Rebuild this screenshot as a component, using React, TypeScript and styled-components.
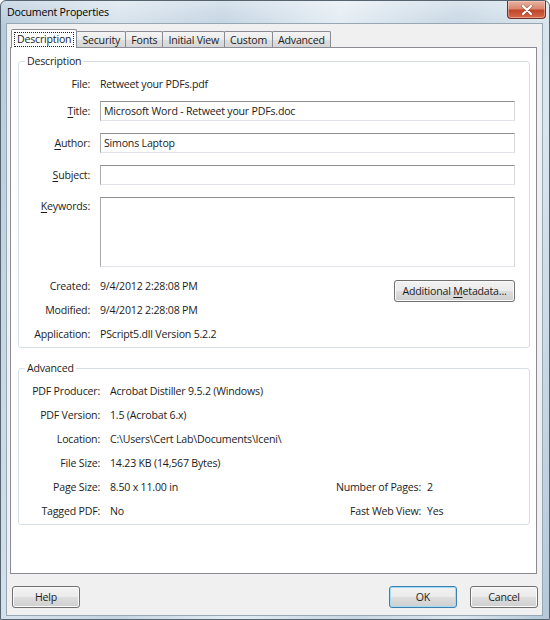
import React from "react";
import styled, { createGlobalStyle } from "styled-components";

const GlobalStyle = createGlobalStyle`
  html, body {
    margin: 0;
    padding: 0;
  }
  body {
    width: 550px;
    height: 620px;
    overflow: hidden;
    font-family: "Segoe UI", "Open Sans", "Noto Sans", sans-serif;
    font-size: 10.6px;
    letter-spacing: -0.2px;
    color: #1c1c1c;
  }
  * {
    box-sizing: border-box;
  }
`;

const Window = styled.div`
  width: 550px;
  height: 620px;
  display: flex;
  flex-direction: column;
  border: 1px solid #56646f;
  border-radius: 6px 6px 0 0;
  background: linear-gradient(
      180deg,
      rgba(255, 255, 255, 0.35) 0%,
      rgba(255, 255, 255, 0) 4%
    ),
    linear-gradient(
      100deg,
      #b5cadb 0%,
      #d6e2ec 18%,
      #c3d4e2 34%,
      #e3ecf3 52%,
      #c6d6e3 70%,
      #dbe6ef 86%,
      #b3c8da 100%
    );
`;

const TitleBar = styled.div`
  height: 22px;
  flex: none;
  display: flex;
  justify-content: space-between;
  align-items: flex-start;
  padding-left: 6px;
`;

const Caption = styled.span`
  padding-top: 3px;
  line-height: 16px;
  color: #000;
`;

const CloseButton = styled.div`
  width: 39px;
  height: 18px;
  margin-right: 3px;
  border: 1px solid #6e3024;
  border-top: none;
  border-radius: 0 0 4px 4px;
  background: linear-gradient(
    180deg,
    #e9b2a2 0%,
    #d98770 45%,
    #c0462a 55%,
    #d66a48 100%
  );
  box-shadow: inset 0 0 0 1px rgba(255, 220, 210, 0.45);
  display: flex;
  align-items: center;
  justify-content: center;
`;

const Client = styled.div`
  flex: 1;
  margin: 0 6px 3px 5px;
  border: 1px solid #98a7b4;
  background: #f0f0f0;
  display: flex;
  flex-direction: column;
  padding: 5px 5px 0 3px;
`;

const TabStrip = styled.div`
  height: 18px;
  display: flex;
  align-items: flex-end;
  padding-left: 1px;
`;

const Tab = styled.div<{ $active?: boolean }>`
  position: relative;
  z-index: ${(p) => (p.$active ? 2 : 1)};
  height: ${(p) => (p.$active ? 19 : 16)}px;
  margin-bottom: ${(p) => (p.$active ? -1 : 0)}px;
  margin-left: -1px;
  padding: 0 ${(p) => (p.$active ? 2 : 5)}px;
  border: 1px solid #898c95;
  border-bottom: none;
  border-radius: 2px 2px 0 0;
  background: ${(p) =>
    p.$active
      ? "#ffffff"
      : "linear-gradient(180deg, #f4f4f4 0%, #eaeaea 50%, #dedede 52%, #d6d6d6 100%)"};
  display: flex;
  align-items: center;
  line-height: 14px;
  white-space: nowrap;
  &:first-child {
    margin-left: 0;
  }
`;

const FocusLabel = styled.span`
  border: 1px dotted #222;
  padding: 0 2px;
  line-height: 13px;
`;

const Panel = styled.div`
  flex: 1;
  background: #fff;
  border: 1px solid #898c95;
  padding: 5px 6px 0 7px;
  display: flex;
  flex-direction: column;
`;

const GroupBox = styled.fieldset<{ $mt?: number }>`
  margin: ${(p) => p.$mt ?? 0}px 0 0 0;
  padding: 5px 14px 3px 7px;
  border: 1px solid #d5dfe5;
  border-radius: 3px;
  min-width: 0;
`;

const Legend = styled.legend`
  padding: 0 2px;
  margin-left: -1px;
  line-height: 16px;
  color: #1c1c1c;
`;

const FieldRow = styled.div<{ $mt?: number; $h: number }>`
  display: grid;
  grid-template-columns: 74px 1fr;
  margin-top: ${(p) => p.$mt ?? 0}px;
  height: ${(p) => p.$h}px;
`;

const Label = styled.div<{ $top?: boolean }>`
  text-align: right;
  padding-right: 10px;
  line-height: ${(p) => (p.$top ? "16px" : "20px")};
  padding-top: ${(p) => (p.$top ? 1 : 0)}px;
  white-space: nowrap;
`;

const Value = styled.div`
  line-height: 20px;
  white-space: nowrap;
`;

const TextBox = styled.input`
  width: 100%;
  height: 20px;
  margin: 0;
  padding: 0 3px;
  border: 1px solid;
  border-color: #8f8f8f #d6d6d6 #e2e3ea #aaaaaa;
  background: #fff;
  font: inherit;
  letter-spacing: inherit;
  color: #1c1c1c;
  outline: none;
`;

const TextArea = styled.textarea`
  width: 100%;
  height: 70px;
  margin: 0;
  padding: 1px 3px;
  border: 1px solid;
  border-color: #8f8f8f #d6d6d6 #e2e3ea #aaaaaa;
  background: #fff;
  font: inherit;
  resize: none;
  outline: none;
`;

const DateGrid = styled.div`
  display: grid;
  grid-template-columns: 74px 1fr auto;
  grid-auto-rows: 20px;
  row-gap: 4px;
  margin-top: 9px;
`;

const AdvGrid = styled.div`
  display: grid;
  grid-template-columns: 84px 1fr auto 88px;
  grid-auto-rows: 20px;
  row-gap: 4px;
`;

const SideLabel = styled.div`
  text-align: right;
  padding-right: 6px;
  line-height: 20px;
  white-space: nowrap;
`;

const Button = styled.button<{ $default?: boolean; $w?: number }>`
  width: ${(p) => p.$w ?? 68}px;
  height: 22px;
  padding: 0;
  margin: 0;
  font: inherit;
  letter-spacing: inherit;
  color: #1c1c1c;
  border: 1px solid ${(p) => (p.$default ? "#3c7fb1" : "#707070")};
  border-radius: 3px;
  background: linear-gradient(
    180deg,
    #f2f2f2 0%,
    #ebebeb 48%,
    #dddddd 52%,
    #cfcfcf 100%
  );
  box-shadow: inset 0 0 0 1px
    ${(p) => (p.$default ? "#9fdcf5" : "#fbfbfb")};
  line-height: 18px;
`;

const MetaButton = styled(Button)`
  grid-column: 3;
  grid-row: 1 / span 2;
  align-self: start;
  margin-top: 4px;
`;

const Footer = styled.div`
  height: 41px;
  flex: none;
  display: flex;
  align-items: flex-start;
  padding-top: 12px;
  margin: 0 -1px 0 2px;
  gap: 13px;
`;

const Spacer = styled.div`
  flex: 1;
`;

const Key = styled.u`
  text-decoration-thickness: 1px;
  text-underline-offset: 2px;
`;

const tabs = ["Security", "Fonts", "Initial View", "Custom", "Advanced"];

const App = () => {
  return (
    <>
      <GlobalStyle />
      <Window>
        <TitleBar>
          <Caption>Document Properties</Caption>
          <CloseButton>
            <svg width="12" height="10" viewBox="0 0 12 10">
              <path
                d="M2 1 L10 9 M10 1 L2 9"
                stroke="#5a1a10"
                strokeWidth="3.4"
                strokeLinecap="round"
                opacity="0.35"
              />
              <path
                d="M2 1 L10 9 M10 1 L2 9"
                stroke="#ffffff"
                strokeWidth="2.2"
                strokeLinecap="round"
              />
            </svg>
          </CloseButton>
        </TitleBar>
        <Client>
          <TabStrip>
            <Tab $active>
              <FocusLabel>Description</FocusLabel>
            </Tab>
            {tabs.map((t) => (
              <Tab key={t}>{t}</Tab>
            ))}
          </TabStrip>
          <Panel>
            <GroupBox>
              <Legend>Description</Legend>
              <FieldRow $h={20}>
                <Label>File:</Label>
                <Value>Retweet your PDFs.pdf</Value>
              </FieldRow>
              <FieldRow $h={20} $mt={7}>
                <Label>
                  <Key>T</Key>itle:
                </Label>
                <TextBox
                  readOnly
                  value="Microsoft Word - Retweet your PDFs.doc"
                />
              </FieldRow>
              <FieldRow $h={20} $mt={12}>
                <Label>
                  <Key>A</Key>uthor:
                </Label>
                <TextBox readOnly value="Simons Laptop" />
              </FieldRow>
              <FieldRow $h={20} $mt={12}>
                <Label>
                  <Key>S</Key>ubject:
                </Label>
                <TextBox readOnly value="" />
              </FieldRow>
              <FieldRow $h={70} $mt={12}>
                <Label $top>
                  <Key>K</Key>eywords:
                </Label>
                <TextArea readOnly value="" />
              </FieldRow>
              <DateGrid>
                <Label>Created:</Label>
                <Value>9/4/2012 2:28:08 PM</Value>
                <MetaButton $w={121}>
                  Additional <Key>M</Key>etadata...
                </MetaButton>
                <Label>Modified:</Label>
                <Value>9/4/2012 2:28:08 PM</Value>
                <Label>Application:</Label>
                <Value>PScript5.dll Version 5.2.2</Value>
              </DateGrid>
            </GroupBox>
            <GroupBox $mt={12}>
              <Legend>Advanced</Legend>
              <AdvGrid>
                <Label>PDF Producer:</Label>
                <Value>Acrobat Distiller 9.5.2 (Windows)</Value>
                <div />
                <div />
                <Label>PDF Version:</Label>
                <Value>1.5 (Acrobat 6.x)</Value>
                <div />
                <div />
                <Label>Location:</Label>
                <Value>C:\Users\Cert Lab\Documents\Iceni\</Value>
                <div />
                <div />
                <Label>File Size:</Label>
                <Value>14.23 KB (14,567 Bytes)</Value>
                <div />
                <div />
                <Label>Page Size:</Label>
                <Value>8.50 x 11.00 in</Value>
                <SideLabel>Number of Pages:</SideLabel>
                <Value>2</Value>
                <Label>Tagged PDF:</Label>
                <Value>No</Value>
                <SideLabel>Fast Web View:</SideLabel>
                <Value>Yes</Value>
              </AdvGrid>
            </GroupBox>
          </Panel>
          <Footer>
            <Button>Help</Button>
            <Spacer />
            <Button $default>OK</Button>
            <Button>Cancel</Button>
          </Footer>
        </Client>
      </Window>
    </>
  );
};

export default App;
